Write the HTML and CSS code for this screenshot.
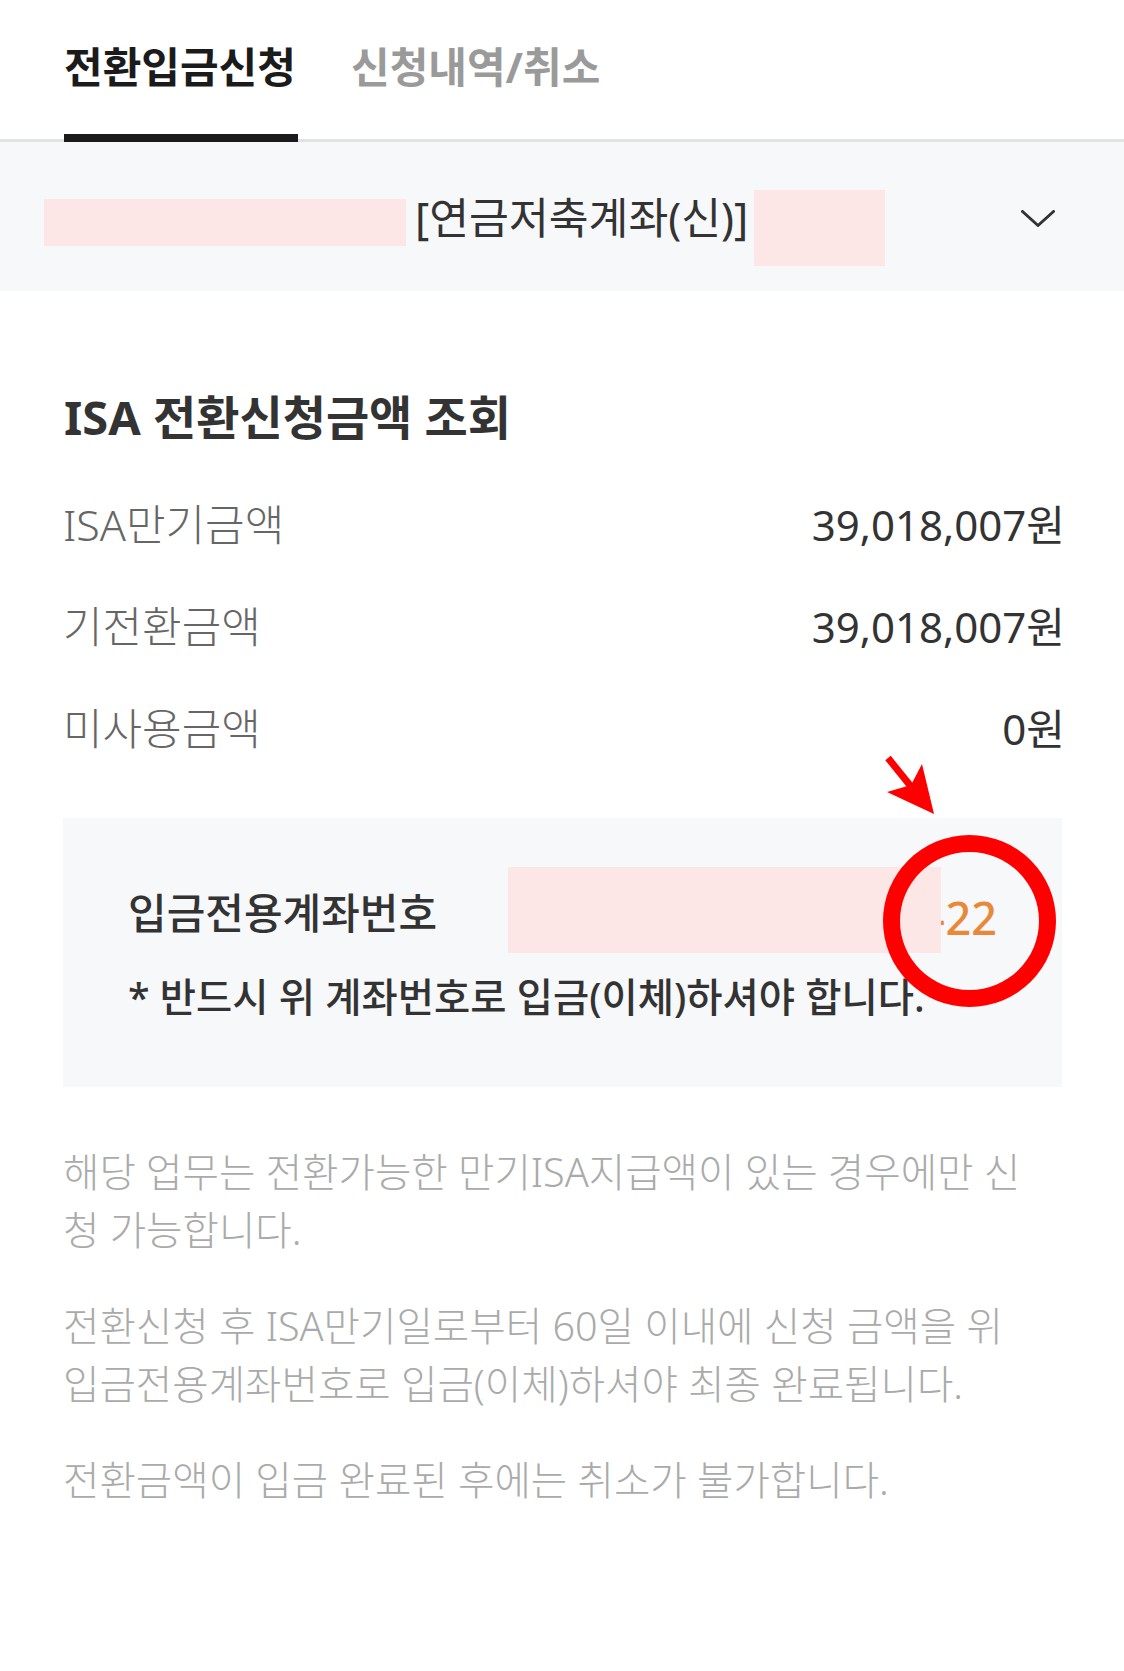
FILE: index.html
```html
<!DOCTYPE html>
<html lang="ko">
<head>
<meta charset="utf-8">
<title>전환입금신청</title>
<link rel="stylesheet" href="styles.css">
</head>
<body>
<div class="page">
  <nav class="tabs">
    <div class="tab active">전환입금신청</div>
    <div class="tab">신청내역/취소</div>
  </nav>

  <div class="account-select">
    <span class="mask mask-a"></span>
    <span class="acct-name">[연금저축계좌(신)]</span>
    <span class="mask mask-b"></span>
    <svg class="chev" viewBox="0 0 34 17" aria-hidden="true">
      <polyline points="1.5,1.5 17,15.5 32.5,1.5" fill="none" stroke="#333" stroke-width="3" stroke-linecap="round" stroke-linejoin="round"/>
    </svg>
  </div>

  <main class="content">
    <h2 class="title">ISA 전환신청금액 조회</h2>
    <dl class="rows">
      <div class="row"><dt>ISA만기금액</dt><dd>39,018,007원</dd></div>
      <div class="row"><dt>기전환금액</dt><dd>39,018,007원</dd></div>
      <div class="row"><dt>미사용금액</dt><dd>0원</dd></div>
    </dl>

    <section class="deposit-box">
      <svg class="arrow" viewBox="0 0 51 60" aria-hidden="true">
        <line x1="3" y1="3" x2="28" y2="34" stroke="#ff0000" stroke-width="7"/>
        <polygon points="49,59 2,37 26,30 37,9" fill="#ff0000"/>
      </svg>
      <span class="ring"></span>
      <div class="acct-row">
        <span class="acct-label">입금전용계좌번호</span>
        <span class="mask mask-c"></span>
        <span class="acct-num">-22</span>
      </div>
      <p class="notice">* 반드시 위 계좌번호로 입금(이체)하셔야 합니다.</p>
    </section>

    <div class="notes">
      <p>해당 업무는 전환가능한 만기ISA지급액이 있는 경우에만 신청 가능합니다.</p>
      <p>전환신청 후 ISA만기일로부터 60일 이내에 신청 금액을 위 입금전용계좌번호로 입금(이체)하셔야 최종 완료됩니다.</p>
      <p>전환금액이 입금 완료된 후에는 취소가 불가합니다.</p>
    </div>
  </main>
</div>
</body>
</html>
```
FILE: styles.css
```css
body {
  margin: 0;
  background: #ffffff;
  font-family: "Noto Sans", "Noto Sans CJK KR", sans-serif;
}

.page {
  width: 1124px;
}

/* Tabs */
.tabs {
  display: flex;
  align-items: flex-start;
  padding-left: 64px;
  border-bottom: 3px solid #e1e2e5;
}

.tab {
  height: 134px;
  line-height: 134px;
  font-size: 42px;
  font-weight: 700;
  color: #9a9a9a;
  white-space: nowrap;
}

.tab.active {
  width: 234px;
  color: #1b1b1b;
  border-bottom: 8px solid #1b1b1b;
  margin-bottom: -3px;
}

.tab + .tab {
  margin-left: 53px;
}

/* Account selector */
.account-select {
  display: flex;
  align-items: flex-start;
  height: 149px;
  padding: 0 69px 0 44px;
  background: #f7f8fa;
}

.mask {
  display: block;
  background: #fde6e6;
}

.mask-a {
  width: 362px;
  height: 47px;
  margin-top: 57px;
}

.acct-name {
  margin-left: 9px;
  margin-top: 48px;
  font-size: 43.3px;
  line-height: 56px;
  color: #333333;
  white-space: nowrap;
}

.mask-b {
  width: 131px;
  height: 76px;
  margin-left: 6px;
  margin-top: 48px;
}

.chev {
  margin-left: auto;
  margin-top: 68px;
  width: 34px;
  height: 17px;
}

/* Content */
.content {
  padding: 0 62px 0 63px;
}

.title {
  margin: 96px 0 0;
  padding-left: 1px;
  font-size: 47px;
  font-weight: 700;
  line-height: 60px;
  color: #333333;
}

.rows {
  margin: 24px 0 0;
}

.row {
  display: flex;
  justify-content: space-between;
  align-items: center;
  height: 102px;
}

.row dt {
  font-size: 43px;
  font-weight: 300;
  color: #666666;
}

.row dd {
  margin: 0 -3px 0 0;
  font-size: 42px;
  color: #333333;
}

/* Deposit account box */
.deposit-box {
  position: relative;
  margin-top: 41px;
  height: 269px;
  box-sizing: border-box;
  padding: 49px 0 0 65px;
  background: #f7f8fa;
}

.acct-row {
  display: flex;
  align-items: center;
  height: 86px;
}

.acct-label {
  flex: 0 0 380px;
  font-size: 42px;
  font-weight: 500;
  color: #333333;
  white-space: nowrap;
}

.mask-c {
  position: relative;
  width: 433px;
  height: 86px;
}

.acct-num {
  margin-left: -10px;
  margin-top: 14px;
  font-size: 45px;
  font-weight: 500;
  color: #e8893a;
}

.notice {
  margin: 19px 0 0;
  font-size: 39.4px;
  font-weight: 500;
  line-height: 50px;
  color: #333333;
}

.ring {
  position: absolute;
  z-index: 2;
  left: 820px;
  top: 17px;
  width: 173px;
  height: 172px;
  box-sizing: border-box;
  border: 17px solid #ff0000;
  border-radius: 50%;
}

.arrow {
  position: absolute;
  z-index: 2;
  left: 822px;
  top: -63px;
  width: 51px;
  height: 60px;
}

/* Notes */
.notes {
  margin-top: 56px;
  padding-right: 27px;
}

.notes p {
  margin: 0;
  font-size: 39.6px;
  font-weight: 300;
  line-height: 58px;
  color: #aaaaaa;
}

.notes p + p {
  margin-top: 38px;
}
```
